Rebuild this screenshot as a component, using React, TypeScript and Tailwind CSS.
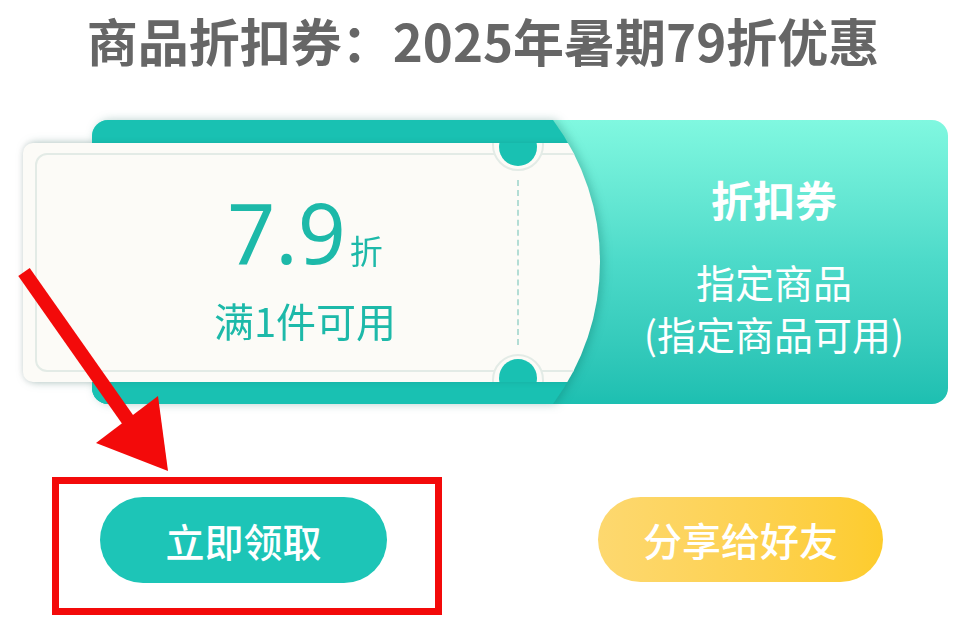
export default function App() {
  return (
    <div className="relative w-[978px] h-[644px] overflow-hidden bg-white font-['Noto_Sans_CJK_SC','Noto_Sans',sans-serif]">
      <h1 className="h-[120px] pt-[10px] pr-[12px] text-center text-[51px] leading-[60px] font-bold text-[#666666]">
        商品折扣券：2025年暑期79折优惠
      </h1>

      {/* coupon card */}
      <div className="ml-[92px] w-[856px] h-[284px] flex rounded-[16px] bg-linear-to-b from-[#80f8e0] via-[#4cdac9] to-[#1dbfb1]">
        <div className="-ml-[69px] w-[577px] h-full drop-shadow-[3px_0_5px_rgba(0,90,80,0.28)]">
          <div className="h-full flex flex-col [clip-path:path('M-14,0H530A238,238,0,0,1,530,284H-14Z')]">
            <div className="ml-[69px] h-[23px] rounded-tl-[16px] bg-[#19c1b2]" />
            <div className="relative flex-1 flex overflow-hidden rounded-l-[10px] bg-[#fcfbf7] shadow-[0_0_6px_rgba(0,0,0,0.1)]">
              <div className="absolute left-[12px] top-[10px] bottom-[10px] right-[-30px] rounded-[12px] border-2 border-[#e3ebe6]" />
              <div className="absolute left-[469px] top-[-24px] w-[52px] h-[52px] rounded-full border-2 border-[#e3ebe6] bg-[#fcfbf7]" />
              <div className="absolute left-[476px] top-[-15px] w-[38px] h-[38px] rounded-full bg-[#19c1b2]" />
              <div className="absolute left-[469px] bottom-[-24px] w-[52px] h-[52px] rounded-full border-2 border-[#e3ebe6] bg-[#fcfbf7]" />
              <div className="absolute left-[476px] bottom-[-15px] w-[38px] h-[38px] rounded-full bg-[#19c1b2]" />

              <div className="relative w-[494px] flex flex-col items-center justify-center pl-[70px] pt-[4px] text-[#1db9a9]">
                <div className="flex items-baseline leading-none">
                  <span className="text-[84px] font-['Noto_Sans',sans-serif]">7.9</span>
                  <span className="ml-[4px] text-[33px]">折</span>
                </div>
                <div className="mt-[26px] text-[40px] leading-none">满1件可用</div>
              </div>
              <div className="relative w-0 h-[165px] self-center border-l-2 border-dashed border-[#b3ddd5]" />
            </div>
            <div className="ml-[69px] h-[22px] rounded-bl-[16px] bg-[#19c1b2]" />
          </div>
        </div>

        <div className="flex-1 flex flex-col items-center pt-[54px] text-white">
          <div className="text-[42px] leading-[50px] font-bold">折扣券</div>
          <div className="mt-[31px] text-[39px] leading-[52px]">指定商品</div>
          <div className="text-[39px] leading-[52px]">(指定商品可用)</div>
        </div>
      </div>

      {/* buttons */}
      <div className="mt-[73px] flex items-start">
        <div className="ml-[52px] border-[7px] border-[#f30a0a] pt-[13px] pb-[25px] pl-[41px] pr-[48px]">
          <button className="w-[287px] h-[86px] rounded-full bg-[#1dc5b7] text-[39px] font-medium text-white">
            立即领取
          </button>
        </div>
        <button className="ml-[156px] mt-[20px] w-[285px] h-[85px] rounded-full bg-linear-to-r from-[#fdd86f] to-[#fdcc2c] text-[39px] font-medium text-white">
          分享给好友
        </button>
      </div>

      {/* annotation arrow */}
      <svg className="absolute left-0 top-0 w-[978px] h-[644px] pointer-events-none" viewBox="0 0 978 644">
        <line x1="24" y1="272" x2="128" y2="420" stroke="#f30a0a" strokeWidth="14" />
        <polygon points="96,443 158,396 168,471" fill="#f30a0a" />
      </svg>
    </div>
  );
}
